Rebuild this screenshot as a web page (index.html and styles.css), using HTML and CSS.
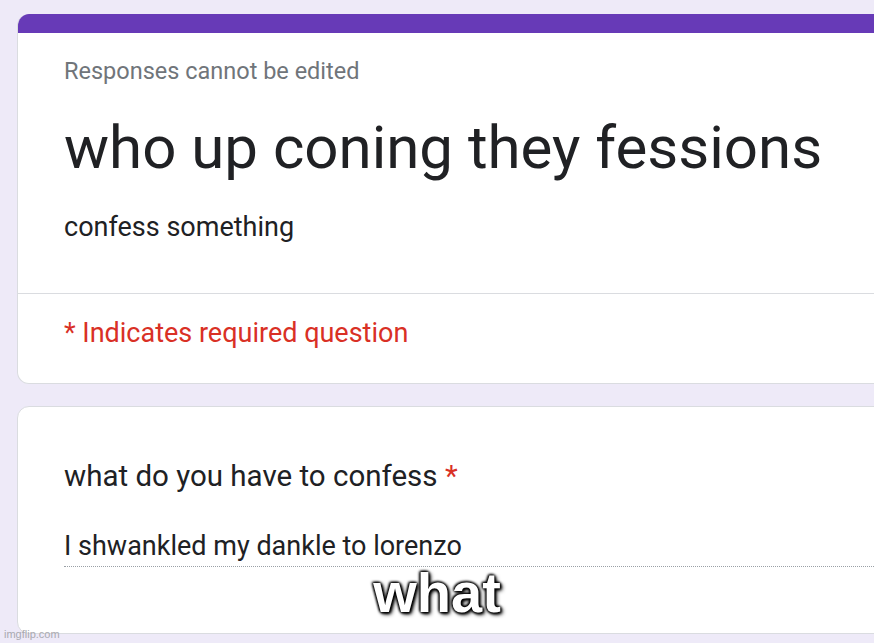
FILE: index.html
```html
<!DOCTYPE html>
<html lang="en">
<head>
    <meta charset="UTF-8">
    <meta name="viewport" content="width=device-width, initial-scale=1.0">
    <title>who up coning they fessions</title>
    <link rel="stylesheet" href="styles.css">
</head>
<body>
    <div class="page">
        <div class="card header-card">
            <div class="top-bar"></div>
            <div class="header-body">
                <div class="notice">Responses cannot be edited</div>
                <h1 class="form-title">who up coning they fessions</h1>
                <div class="form-desc">confess something</div>
            </div>
            <div class="required-note">* Indicates required question</div>
        </div>

        <div class="card question-card">
            <div class="question">what do you have to confess <span class="star">*</span></div>
            <div class="answer">I shwankled my dankle to lorenzo</div>
        </div>
    </div>

    <div class="caption">what</div>
    <div class="watermark">imgflip.com</div>
</body>
</html>
```

FILE: styles.css
```css
html, body { margin: 0; height: 100%; overflow: hidden; }
body { background: #eeeaf8; font-family: Roboto, "Liberation Sans", sans-serif; color: #202124; position: relative; }
.page { padding: 14px 0 0 17px; width: 1000px; }
.card { background: #fff; border: 1px solid #dadce0; border-radius: 12px; overflow: hidden; }
.header-card { border-top: none; }
.top-bar { height: 19px; background: #673ab7; }
.header-body { padding: 24px 46px 49px; border-bottom: 1px solid #dadce0; }
.notice { font-size: 23.5px; color: #70757a; line-height: 28px; }
.form-title { font-size: 60px; font-weight: 400; margin: 27px 0 0; line-height: 72px; }
.form-desc { font-size: 27px; line-height: 34px; margin-top: 26px; }
.required-note { color: #d93025; font-size: 27px; line-height: 34px; padding: 22px 46px 33px; }
.question-card { margin-top: 22px; padding: 51px 46px 66px; }
.question { font-size: 29.5px; line-height: 36px; }
.star { color: #d93025; }
.answer { font-size: 27px; line-height: 34px; margin-top: 35px; padding-bottom: 3px; border-bottom: 1px dotted #9aa0a6; }
.caption { position: absolute; left: 0; right: 0; bottom: 22px; text-align: center; font-family: "Liberation Sans", Arial, sans-serif; font-weight: bold; font-size: 56px; color: #fff; line-height: 1; text-shadow: 0 0 3px #000, 0 0 3px #000, 1px 1px 3px #000, -1px -1px 3px #000, 2px 2px 4px #000; }
.watermark { position: absolute; left: 4px; bottom: 3px; font-family: "Liberation Sans", Arial, sans-serif; font-size: 11px; color: #a9a9b0; }
```
